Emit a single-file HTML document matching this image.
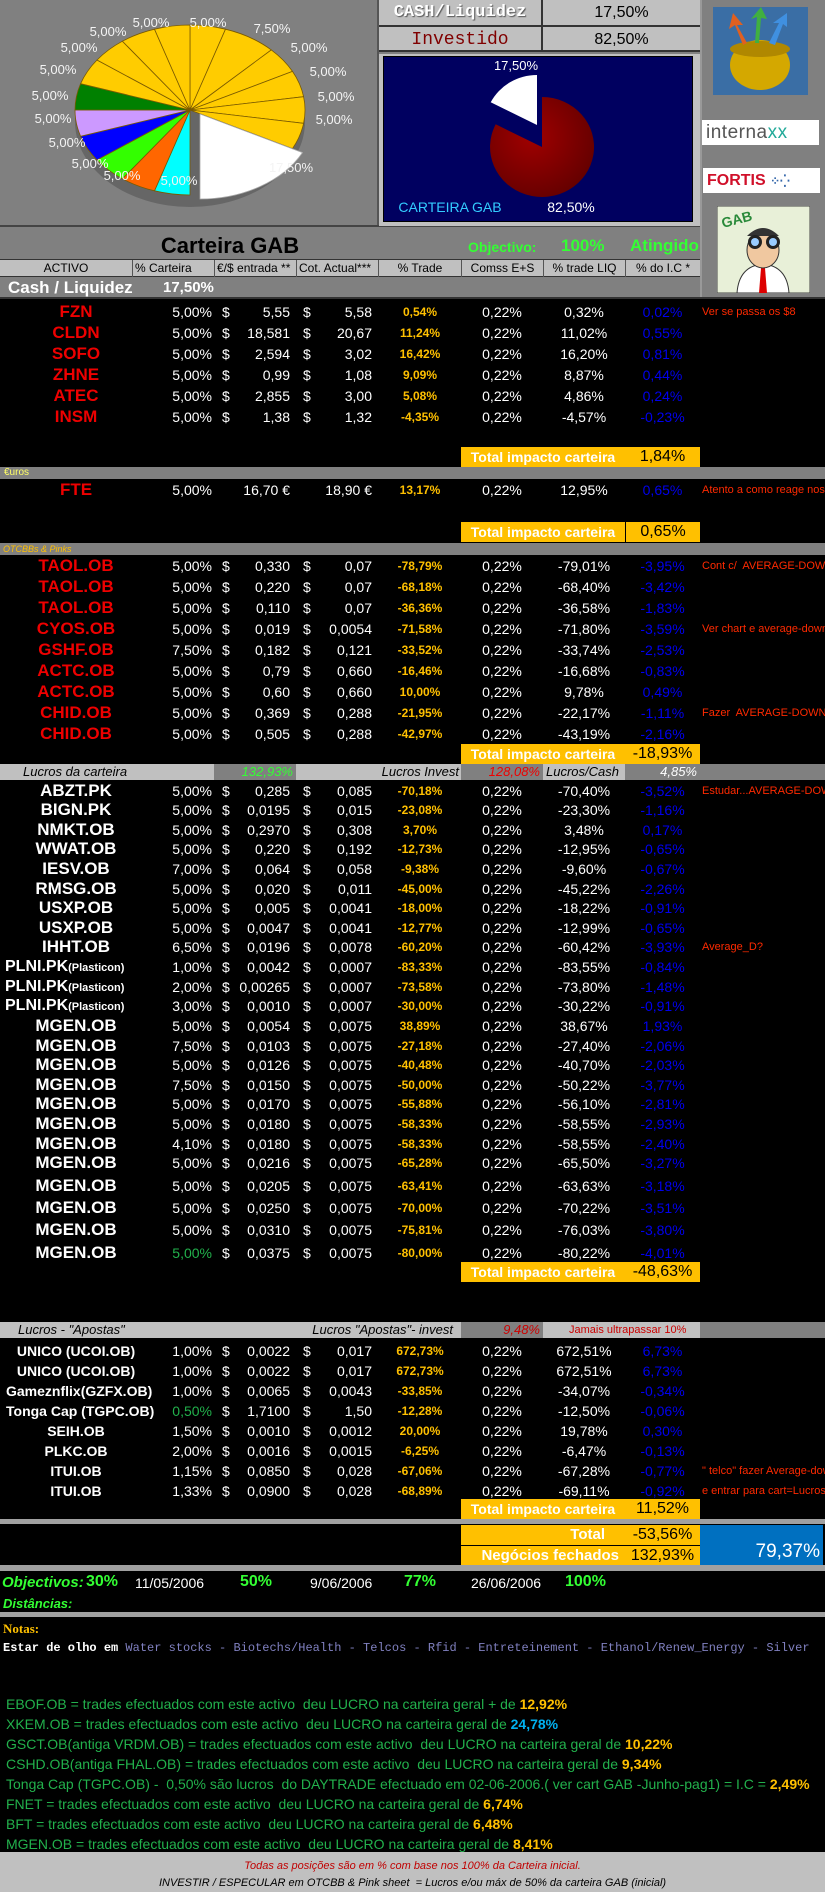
<!DOCTYPE html>
<html><head><meta charset="utf-8">
<style>
*{margin:0;padding:0;box-sizing:border-box}
body{width:825px;height:1892px;background:#000;position:relative;overflow:hidden;font-family:"Liberation Sans Narrow","Liberation Sans",sans-serif;color:#fff}
.a{position:absolute}
.r{position:absolute;left:0;width:825px;height:20px;line-height:20px;font-size:14px;color:#fff}
.r span{position:absolute;top:0;white-space:nowrap}
.t{left:0;width:152px;text-align:center;color:#e00;font-weight:bold;font-size:17px}
.w .t{color:#fff}
.s .t{color:#fff;font-size:14px}
.c{left:140px;width:72px;text-align:right}
.d1{left:222px}
.e{left:225px;width:65px;text-align:right}
.d2{left:303px}
.f{left:305px;width:67px;text-align:right}
.g{left:380px;width:80px;text-align:center;color:#ffc000;font-weight:bold;font-size:12px}
.h{left:461px;width:82px;text-align:center}
.i{left:543px;width:82px;text-align:center}
.j{left:625px;width:75px;text-align:center;color:#0000ee}
.k{left:702px;color:#ff2a00;font-size:11px}
.tot{position:absolute;left:461px;width:239px;height:20px;background:#ffc000;line-height:20px;font-size:16px;white-space:nowrap}
.tot b{position:absolute;left:0;width:164px;text-align:center;color:#fff;font-weight:bold;font-size:14px;white-space:nowrap;overflow:hidden}
.tot i{position:absolute;left:164px;width:75px;text-align:center;color:#000;font-style:normal}
.band{position:absolute;left:0;width:825px;background:#808080}
.lg{background:#c0c0c0}
.dg{background:#808080}
.note{position:absolute;left:6px;font-size:14px;color:#22b14c;white-space:nowrap}
.note b{color:#ffc000}
.pl{font-size:13px;fill:#f4f4f4;font-family:"Liberation Sans Narrow","Liberation Sans",sans-serif;text-anchor:middle}
</style></head><body>

<div class="a" style="left:0;top:0;width:825px;height:298px;background:#808080"></div>
<div class="a" style="left:700px;top:0;width:2px;height:298px;background:#999"></div>
<div class="a" style="left:377px;top:0;width:2px;height:226px;background:#555"></div>
<div class="a" style="left:0;top:225px;width:700px;height:2px;background:#444"></div>

<svg class="a" style="left:0;top:0" width="378" height="225">
<ellipse cx="190" cy="122" rx="115" ry="85" fill="#666"/>
<g stroke="#7a5a00" stroke-width="0.8">
<path d="M190 110 L190 25 A115 85 0 0 1 225.5 29.2Z" fill="#ffcc00"/>
<path d="M190 110 L225.5 29.2 A115 85 0 0 1 271.3 49.9Z" fill="#ffcc00"/>
<path d="M190 110 L271.3 49.9 A115 85 0 0 1 292.5 71.4Z" fill="#ffcc00"/>
<path d="M190 110 L292.5 71.4 A115 85 0 0 1 303.6 96.7Z" fill="#ffcc00"/>
<path d="M190 110 L303.6 96.7 A115 85 0 0 1 303.6 123.3Z" fill="#ffcc00"/>
<path d="M190 110 L303.6 123.3 A115 85 0 0 1 292.5 148.6Z" fill="#ffcc00"/>
<path d="M200 114 L302.5 152.6 A115 85 0 0 1 200 199Z" fill="#ffffff" stroke="#aaa"/>
<path d="M190 110 L190 195 A115 85 0 0 1 154.5 190.8Z" fill="#00ffff"/>
<path d="M190 110 L154.5 190.8 A115 85 0 0 1 122.4 178.8Z" fill="#ff6600"/>
<path d="M190 110 L122.4 178.8 A115 85 0 0 1 97 160Z" fill="#33ff00"/>
<path d="M190 110 L97 160 A115 85 0 0 1 80.6 136.3Z" fill="#0000ff"/>
<path d="M190 110 L80.6 136.3 A115 85 0 0 1 75 110Z" fill="#cc99ff"/>
<path d="M190 110 L75 110 A115 85 0 0 1 80.6 83.7Z" fill="#008000"/>
<path d="M190 110 L80.6 83.7 A115 85 0 0 1 97 60Z" fill="#ffcc00"/>
<path d="M190 110 L97 60 A115 85 0 0 1 122.4 41.2Z" fill="#ffcc00"/>
<path d="M190 110 L122.4 41.2 A115 85 0 0 1 154.5 29.2Z" fill="#ffcc00"/>
<path d="M190 110 L154.5 29.2 A115 85 0 0 1 190 25Z" fill="#ffcc00"/>
</g>
<text class="pl" x="272" y="33">7,50%</text>
<text class="pl" x="208" y="27">5,00%</text>
<text class="pl" x="151" y="27">5,00%</text>
<text class="pl" x="108" y="36">5,00%</text>
<text class="pl" x="79" y="52">5,00%</text>
<text class="pl" x="58" y="74">5,00%</text>
<text class="pl" x="50" y="100">5,00%</text>
<text class="pl" x="53" y="123">5,00%</text>
<text class="pl" x="67" y="147">5,00%</text>
<text class="pl" x="90" y="168">5,00%</text>
<text class="pl" x="122" y="180">5,00%</text>
<text class="pl" x="179" y="185">5,00%</text>
<text class="pl" x="291" y="172">17,50%</text>
<text class="pl" x="309" y="52">5,00%</text>
<text class="pl" x="328" y="76">5,00%</text>
<text class="pl" x="336" y="101">5,00%</text>
<text class="pl" x="334" y="124">5,00%</text>
</svg>

<div class="a" style="left:379px;top:0;width:321px;height:52px;background:#c0c0c0;border-bottom:2px solid #333"></div>
<div class="a" style="left:379px;top:25px;width:321px;height:2px;background:#333"></div>
<div class="a" style="left:541px;top:0;width:2px;height:52px;background:#333"></div>
<div class="a" style="left:379px;top:0;width:162px;height:26px;line-height:26px;text-align:center;font-family:'Liberation Mono',monospace;font-weight:bold;font-size:17px;color:#fff;text-shadow:1px 1px 1px #555">CASH/Liquidez</div>
<div class="a" style="left:543px;top:0;width:157px;height:26px;line-height:26px;text-align:center;font-size:16px;color:#000">17,50%</div>
<div class="a" style="left:379px;top:27px;width:162px;height:26px;line-height:26px;text-align:center;font-family:'Liberation Mono',monospace;font-size:18px;color:#800000">Investido</div>
<div class="a" style="left:543px;top:27px;width:157px;height:26px;line-height:26px;text-align:center;font-size:16px;color:#000">82,50%</div>
<div class="a" style="left:379px;top:54px;width:321px;height:172px;background:#c0c0c0"></div>
<svg class="a" style="left:383px;top:56px" width="310" height="166">
<rect width="310" height="166" fill="#000060" stroke="#000" stroke-width="2"/>
<defs><radialGradient id="rg" cx="0.4" cy="0.4" r="0.7"><stop offset="0" stop-color="#a00000"/><stop offset="1" stop-color="#600000"/></radialGradient></defs>
<path d="M159 91 L159 41 A52 50 0 1 1 112.7 68.3Z" fill="url(#rg)"/>
<path d="M154 69 L107.7 46.3 A52 50 0 0 1 154 19Z" fill="#fff"/>
<text x="133" y="14" fill="#fff" font-size="13" text-anchor="middle" font-family="Liberation Sans Narrow,Liberation Sans,sans-serif">17,50%</text>
<text x="67" y="156" fill="#33ccff" font-size="14" text-anchor="middle" font-family="Liberation Sans Narrow,Liberation Sans,sans-serif">CARTEIRA GAB</text>
<text x="188" y="156" fill="#fff" font-size="14" text-anchor="middle" font-family="Liberation Sans Narrow,Liberation Sans,sans-serif">82,50%</text>
</svg>

<svg class="a" style="left:713px;top:7px" width="95" height="88">
<rect width="95" height="88" fill="#3a6ea5"/>
<ellipse cx="47" cy="58" rx="30" ry="25" fill="#d4a800"/>
<ellipse cx="47" cy="42" rx="30" ry="8" fill="#b08800"/>
<path d="M30 38 L22 18 L16 22 L20 6 L30 18 L24 18 L34 36Z" fill="#e06020"/>
<path d="M42 36 L44 10 L38 12 L48 0 L54 12 L48 11 L46 36Z" fill="#40b040"/>
<path d="M56 36 L66 16 L60 16 L74 6 L74 20 L70 17 L62 38Z" fill="#4090e0"/>
</svg>
<div class="a" style="left:702px;top:120px;width:117px;height:25px;background:#fff;line-height:25px;font-size:19px;color:#555;padding-left:4px;letter-spacing:0.5px">interna<span style="color:#2a9">xx</span></div>
<div class="a" style="left:703px;top:168px;width:117px;height:25px;background:#fff;line-height:25px;font-size:16px;font-weight:bold;color:#d0102a;padding-left:4px;font-family:'Liberation Sans',sans-serif">FORTIS <span style="color:#36a;font-size:12px">⁘⁛</span></div>
<svg class="a" style="left:717px;top:206px" width="93" height="87">
<rect width="93" height="87" fill="#e8f0d8" stroke="#444"/>
<text x="6" y="22" fill="#2a8a3a" font-size="14" font-weight="bold" font-family="Liberation Sans,sans-serif" transform="rotate(-15 6 22)">GAB</text>
<path d="M20 87 Q22 60 46 58 Q70 60 72 87Z" fill="#fff" stroke="#333"/>
<path d="M44 62 L48 62 L50 87 L42 87Z" fill="#d00"/>
<ellipse cx="46" cy="44" rx="16" ry="18" fill="#f0c8a0" stroke="#333"/>
<path d="M30 30 Q46 14 62 30" fill="#333"/>
<circle cx="38" cy="36" r="7" fill="#222"/><circle cx="56" cy="36" r="7" fill="#222"/>
<circle cx="38" cy="36" r="4" fill="#9cf"/><circle cx="56" cy="36" r="4" fill="#9cf"/>
</svg>

<div class="a" style="left:150px;top:233px;width:160px;text-align:center;font-size:22px;font-weight:bold;color:#000;font-family:'Liberation Sans',sans-serif">Carteira GAB</div>
<div class="a" style="left:468px;top:239px;font-size:14px;color:#33ff33;font-weight:bold">Objectivo:</div>
<div class="a" style="left:561px;top:236px;font-size:17px;color:#33ff33;font-weight:bold">100%</div>
<div class="a" style="left:630px;top:236px;font-size:17px;color:#33ff33;font-weight:bold">Atingido</div>

<div class="a lg" style="left:0;top:259px;width:700px;height:18px;border-top:1px solid #333;border-bottom:1px solid #333"></div>
<div class="a" style="left:0;top:260px;width:700px;height:17px;font-size:12px;color:#000;line-height:17px;white-space:nowrap">
<span class="a" style="left:0;width:132px;text-align:center">ACTIVO</span>
<span class="a" style="left:132px;width:82px;border-left:1px solid #555;padding-left:2px">% Carteira</span>
<span class="a" style="left:214px;width:82px;border-left:1px solid #555;padding-left:2px;overflow:hidden">€/$ entrada **</span>
<span class="a" style="left:296px;width:82px;border-left:1px solid #555;padding-left:2px;overflow:hidden">Cot. Actual***</span>
<span class="a" style="left:378px;width:83px;border-left:1px solid #555;text-align:center">% Trade</span>
<span class="a" style="left:461px;width:82px;border-left:1px solid #555;text-align:center">Comss E+S</span>
<span class="a" style="left:543px;width:82px;border-left:1px solid #555;text-align:center">% trade LIQ</span>
<span class="a" style="left:625px;width:75px;border-left:1px solid #555;text-align:center">% do I.C *</span>
</div>
<div class="a" style="left:8px;top:278px;font-size:17px;font-weight:bold;color:#fff">Cash / Liquidez</div>
<div class="a" style="left:163px;top:279px;font-size:15px;font-weight:bold;color:#fff">17,50%</div>
<div class="a" style="left:0;top:297px;width:825px;height:2px;background:#333"></div>

<div class="r" style="top:302px"><span class="t">FZN</span><span class="c">5,00%</span><span class="d1">$</span><span class="e">5,55</span><span class="d2">$</span><span class="f">5,58</span><span class="g">0,54%</span><span class="h">0,22%</span><span class="i">0,32%</span><span class="j">0,02%</span><span class="k">Ver se passa os $8</span></div>
<div class="r" style="top:323px"><span class="t">CLDN</span><span class="c">5,00%</span><span class="d1">$</span><span class="e">18,581</span><span class="d2">$</span><span class="f">20,67</span><span class="g">11,24%</span><span class="h">0,22%</span><span class="i">11,02%</span><span class="j">0,55%</span></div>
<div class="r" style="top:344px"><span class="t">SOFO</span><span class="c">5,00%</span><span class="d1">$</span><span class="e">2,594</span><span class="d2">$</span><span class="f">3,02</span><span class="g">16,42%</span><span class="h">0,22%</span><span class="i">16,20%</span><span class="j">0,81%</span></div>
<div class="r" style="top:365px"><span class="t">ZHNE</span><span class="c">5,00%</span><span class="d1">$</span><span class="e">0,99</span><span class="d2">$</span><span class="f">1,08</span><span class="g">9,09%</span><span class="h">0,22%</span><span class="i">8,87%</span><span class="j">0,44%</span></div>
<div class="r" style="top:386px"><span class="t">ATEC</span><span class="c">5,00%</span><span class="d1">$</span><span class="e">2,855</span><span class="d2">$</span><span class="f">3,00</span><span class="g">5,08%</span><span class="h">0,22%</span><span class="i">4,86%</span><span class="j">0,24%</span></div>
<div class="r" style="top:407px"><span class="t">INSM</span><span class="c">5,00%</span><span class="d1">$</span><span class="e">1,38</span><span class="d2">$</span><span class="f">1,32</span><span class="g">-4,35%</span><span class="h">0,22%</span><span class="i">-4,57%</span><span class="j">-0,23%</span></div>
<div class="tot" style="top:447px"><b>Total impacto carteira</b><i>1,84%</i></div>

<div class="band" style="top:467px;height:12px;font-size:10px;line-height:12px;color:#ffff66;padding-left:4px">€uros</div>
<div class="r" style="top:480px"><span class="t">FTE</span><span class="c">5,00%</span><span class="e">16,70 €</span><span class="f">18,90 €</span><span class="g">13,17%</span><span class="h">0,22%</span><span class="i">12,95%</span><span class="j">0,65%</span><span class="k">Atento a como reage nos 18€</span></div>
<div class="tot" style="top:522px"><b>Total impacto carteira</b><i style="border-left:1px solid #000">0,65%</i></div>

<div class="band" style="top:543px;height:12px;font-size:9px;line-height:12px;color:#ffc000;font-style:italic;padding-left:3px">OTCBBs &amp; Pinks</div>
<div class="r" style="top:556px"><span class="t">TAOL.OB</span><span class="c">5,00%</span><span class="d1">$</span><span class="e">0,330</span><span class="d2">$</span><span class="f">0,07</span><span class="g">-78,79%</span><span class="h">0,22%</span><span class="i">-79,01%</span><span class="j">-3,95%</span><span class="k">Cont c/&nbsp; AVERAGE-DOWN?</span></div>
<div class="r" style="top:577px"><span class="t">TAOL.OB</span><span class="c">5,00%</span><span class="d1">$</span><span class="e">0,220</span><span class="d2">$</span><span class="f">0,07</span><span class="g">-68,18%</span><span class="h">0,22%</span><span class="i">-68,40%</span><span class="j">-3,42%</span></div>
<div class="r" style="top:598px"><span class="t">TAOL.OB</span><span class="c">5,00%</span><span class="d1">$</span><span class="e">0,110</span><span class="d2">$</span><span class="f">0,07</span><span class="g">-36,36%</span><span class="h">0,22%</span><span class="i">-36,58%</span><span class="j">-1,83%</span></div>
<div class="r" style="top:619px"><span class="t">CYOS.OB</span><span class="c">5,00%</span><span class="d1">$</span><span class="e">0,019</span><span class="d2">$</span><span class="f">0,0054</span><span class="g">-71,58%</span><span class="h">0,22%</span><span class="i">-71,80%</span><span class="j">-3,59%</span><span class="k">Ver chart e average-down</span></div>
<div class="r" style="top:640px"><span class="t">GSHF.OB</span><span class="c">7,50%</span><span class="d1">$</span><span class="e">0,182</span><span class="d2">$</span><span class="f">0,121</span><span class="g">-33,52%</span><span class="h">0,22%</span><span class="i">-33,74%</span><span class="j">-2,53%</span></div>
<div class="r" style="top:661px"><span class="t">ACTC.OB</span><span class="c">5,00%</span><span class="d1">$</span><span class="e">0,79</span><span class="d2">$</span><span class="f">0,660</span><span class="g">-16,46%</span><span class="h">0,22%</span><span class="i">-16,68%</span><span class="j">-0,83%</span></div>
<div class="r" style="top:682px"><span class="t">ACTC.OB</span><span class="c">5,00%</span><span class="d1">$</span><span class="e">0,60</span><span class="d2">$</span><span class="f">0,660</span><span class="g">10,00%</span><span class="h">0,22%</span><span class="i">9,78%</span><span class="j">0,49%</span></div>
<div class="r" style="top:703px"><span class="t">CHID.OB</span><span class="c">5,00%</span><span class="d1">$</span><span class="e">0,369</span><span class="d2">$</span><span class="f">0,288</span><span class="g">-21,95%</span><span class="h">0,22%</span><span class="i">-22,17%</span><span class="j">-1,11%</span><span class="k">Fazer&nbsp; AVERAGE-DOWN</span></div>
<div class="r" style="top:724px"><span class="t">CHID.OB</span><span class="c">5,00%</span><span class="d1">$</span><span class="e">0,505</span><span class="d2">$</span><span class="f">0,288</span><span class="g">-42,97%</span><span class="h">0,22%</span><span class="i">-43,19%</span><span class="j">-2,16%</span></div>
<div class="tot" style="top:744px"><b>Total impacto carteira</b><i>-18,93%</i></div>

<div class="band" style="top:764px;height:16px"></div>
<div class="a" style="top:764px;height:16px;line-height:16px;font-size:13px;font-style:italic;color:#000;width:825px;left:0;white-space:nowrap">
<span class="a lg" style="left:0;width:214px;height:16px;padding-left:23px">Lucros da carteira</span>
<span class="a dg" style="left:214px;width:82px;height:16px;text-align:right;padding-right:3px;color:#33ff33">132,93%</span>
<span class="a lg" style="left:296px;width:165px;height:16px;text-align:right;padding-right:2px">Lucros Invest</span>
<span class="a dg" style="left:461px;width:82px;height:16px;text-align:right;padding-right:3px;color:#e00">128,08%</span>
<span class="a lg" style="left:543px;width:82px;height:16px;padding-left:3px">Lucros/Cash</span>
<span class="a dg" style="left:625px;width:75px;height:16px;text-align:right;padding-right:3px;color:#fff">4,85%</span>
</div>

<div class="w">
<div class="r" style="top:781px"><span class="t">ABZT.PK</span><span class="c">5,00%</span><span class="d1">$</span><span class="e">0,285</span><span class="d2">$</span><span class="f">0,085</span><span class="g">-70,18%</span><span class="h">0,22%</span><span class="i">-70,40%</span><span class="j">-3,52%</span><span class="k">Estudar...AVERAGE-DOWN</span></div>
<div class="r" style="top:800px"><span class="t">BIGN.PK</span><span class="c">5,00%</span><span class="d1">$</span><span class="e">0,0195</span><span class="d2">$</span><span class="f">0,015</span><span class="g">-23,08%</span><span class="h">0,22%</span><span class="i">-23,30%</span><span class="j">-1,16%</span></div>
<div class="r" style="top:820px"><span class="t">NMKT.OB</span><span class="c">5,00%</span><span class="d1">$</span><span class="e">0,2970</span><span class="d2">$</span><span class="f">0,308</span><span class="g">3,70%</span><span class="h">0,22%</span><span class="i">3,48%</span><span class="j">0,17%</span></div>
<div class="r" style="top:839px"><span class="t">WWAT.OB</span><span class="c">5,00%</span><span class="d1">$</span><span class="e">0,220</span><span class="d2">$</span><span class="f">0,192</span><span class="g">-12,73%</span><span class="h">0,22%</span><span class="i">-12,95%</span><span class="j">-0,65%</span></div>
<div class="r" style="top:859px"><span class="t">IESV.OB</span><span class="c">7,00%</span><span class="d1">$</span><span class="e">0,064</span><span class="d2">$</span><span class="f">0,058</span><span class="g">-9,38%</span><span class="h">0,22%</span><span class="i">-9,60%</span><span class="j">-0,67%</span></div>
<div class="r" style="top:879px"><span class="t">RMSG.OB</span><span class="c">5,00%</span><span class="d1">$</span><span class="e">0,020</span><span class="d2">$</span><span class="f">0,011</span><span class="g">-45,00%</span><span class="h">0,22%</span><span class="i">-45,22%</span><span class="j">-2,26%</span></div>
<div class="r" style="top:898px"><span class="t">USXP.OB</span><span class="c">5,00%</span><span class="d1">$</span><span class="e">0,005</span><span class="d2">$</span><span class="f">0,0041</span><span class="g">-18,00%</span><span class="h">0,22%</span><span class="i">-18,22%</span><span class="j">-0,91%</span></div>
<div class="r" style="top:918px"><span class="t">USXP.OB</span><span class="c">5,00%</span><span class="d1">$</span><span class="e">0,0047</span><span class="d2">$</span><span class="f">0,0041</span><span class="g">-12,77%</span><span class="h">0,22%</span><span class="i">-12,99%</span><span class="j">-0,65%</span></div>
<div class="r" style="top:937px"><span class="t">IHHT.OB</span><span class="c">6,50%</span><span class="d1">$</span><span class="e">0,0196</span><span class="d2">$</span><span class="f">0,0078</span><span class="g">-60,20%</span><span class="h">0,22%</span><span class="i">-60,42%</span><span class="j">-3,93%</span><span class="k">Average_D?</span></div>
<div class="r" style="top:957px"><span class="t" style="text-align:left;padding-left:5px;font-size:16px">PLNI.PK<small style="font-size:11px">(Plasticon)</small></span><span class="c">1,00%</span><span class="d1">$</span><span class="e">0,0042</span><span class="d2">$</span><span class="f">0,0007</span><span class="g">-83,33%</span><span class="h">0,22%</span><span class="i">-83,55%</span><span class="j">-0,84%</span></div>
<div class="r" style="top:977px"><span class="t" style="text-align:left;padding-left:5px;font-size:16px">PLNI.PK<small style="font-size:11px">(Plasticon)</small></span><span class="c">2,00%</span><span class="d1">$</span><span class="e">0,00265</span><span class="d2">$</span><span class="f">0,0007</span><span class="g">-73,58%</span><span class="h">0,22%</span><span class="i">-73,80%</span><span class="j">-1,48%</span></div>
<div class="r" style="top:996px"><span class="t" style="text-align:left;padding-left:5px;font-size:16px">PLNI.PK<small style="font-size:11px">(Plasticon)</small></span><span class="c">3,00%</span><span class="d1">$</span><span class="e">0,0010</span><span class="d2">$</span><span class="f">0,0007</span><span class="g">-30,00%</span><span class="h">0,22%</span><span class="i">-30,22%</span><span class="j">-0,91%</span></div>
<div class="r" style="top:1016px"><span class="t">MGEN.OB</span><span class="c">5,00%</span><span class="d1">$</span><span class="e">0,0054</span><span class="d2">$</span><span class="f">0,0075</span><span class="g">38,89%</span><span class="h">0,22%</span><span class="i">38,67%</span><span class="j">1,93%</span></div>
<div class="r" style="top:1036px"><span class="t">MGEN.OB</span><span class="c">7,50%</span><span class="d1">$</span><span class="e">0,0103</span><span class="d2">$</span><span class="f">0,0075</span><span class="g">-27,18%</span><span class="h">0,22%</span><span class="i">-27,40%</span><span class="j">-2,06%</span></div>
<div class="r" style="top:1055px"><span class="t">MGEN.OB</span><span class="c">5,00%</span><span class="d1">$</span><span class="e">0,0126</span><span class="d2">$</span><span class="f">0,0075</span><span class="g">-40,48%</span><span class="h">0,22%</span><span class="i">-40,70%</span><span class="j">-2,03%</span></div>
<div class="r" style="top:1075px"><span class="t">MGEN.OB</span><span class="c">7,50%</span><span class="d1">$</span><span class="e">0,0150</span><span class="d2">$</span><span class="f">0,0075</span><span class="g">-50,00%</span><span class="h">0,22%</span><span class="i">-50,22%</span><span class="j">-3,77%</span></div>
<div class="r" style="top:1094px"><span class="t">MGEN.OB</span><span class="c">5,00%</span><span class="d1">$</span><span class="e">0,0170</span><span class="d2">$</span><span class="f">0,0075</span><span class="g">-55,88%</span><span class="h">0,22%</span><span class="i">-56,10%</span><span class="j">-2,81%</span></div>
<div class="r" style="top:1114px"><span class="t">MGEN.OB</span><span class="c">5,00%</span><span class="d1">$</span><span class="e">0,0180</span><span class="d2">$</span><span class="f">0,0075</span><span class="g">-58,33%</span><span class="h">0,22%</span><span class="i">-58,55%</span><span class="j">-2,93%</span></div>
<div class="r" style="top:1134px"><span class="t">MGEN.OB</span><span class="c">4,10%</span><span class="d1">$</span><span class="e">0,0180</span><span class="d2">$</span><span class="f">0,0075</span><span class="g">-58,33%</span><span class="h">0,22%</span><span class="i">-58,55%</span><span class="j">-2,40%</span></div>
<div class="r" style="top:1153px"><span class="t">MGEN.OB</span><span class="c">5,00%</span><span class="d1">$</span><span class="e">0,0216</span><span class="d2">$</span><span class="f">0,0075</span><span class="g">-65,28%</span><span class="h">0,22%</span><span class="i">-65,50%</span><span class="j">-3,27%</span></div>
<div class="r" style="top:1176px"><span class="t">MGEN.OB</span><span class="c">5,00%</span><span class="d1">$</span><span class="e">0,0205</span><span class="d2">$</span><span class="f">0,0075</span><span class="g">-63,41%</span><span class="h">0,22%</span><span class="i">-63,63%</span><span class="j">-3,18%</span></div>
<div class="r" style="top:1198px"><span class="t">MGEN.OB</span><span class="c">5,00%</span><span class="d1">$</span><span class="e">0,0250</span><span class="d2">$</span><span class="f">0,0075</span><span class="g">-70,00%</span><span class="h">0,22%</span><span class="i">-70,22%</span><span class="j">-3,51%</span></div>
<div class="r" style="top:1220px"><span class="t">MGEN.OB</span><span class="c">5,00%</span><span class="d1">$</span><span class="e">0,0310</span><span class="d2">$</span><span class="f">0,0075</span><span class="g">-75,81%</span><span class="h">0,22%</span><span class="i">-76,03%</span><span class="j">-3,80%</span></div>
<div class="r" style="top:1243px"><span class="t">MGEN.OB</span><span class="c" style="color:#22b14c">5,00%</span><span class="d1">$</span><span class="e">0,0375</span><span class="d2">$</span><span class="f">0,0075</span><span class="g">-80,00%</span><span class="h">0,22%</span><span class="i">-80,22%</span><span class="j">-4,01%</span></div>
</div>
<div class="tot" style="top:1262px"><b>Total impacto carteira</b><i>-48,63%</i></div>

<div class="band" style="top:1322px;height:16px"></div>
<div class="a" style="top:1322px;height:16px;line-height:16px;font-size:13px;font-style:italic;color:#000;width:825px;left:0;white-space:nowrap">
<span class="a lg" style="left:0;width:296px;height:16px;padding-left:18px">Lucros - "Apostas"</span>
<span class="a lg" style="left:296px;width:165px;height:16px;text-align:right;padding-right:8px">Lucros "Apostas"- invest</span>
<span class="a dg" style="left:461px;width:82px;height:16px;text-align:right;padding-right:3px;color:#c00">9,48%</span>
<span class="a lg" style="left:543px;width:157px;height:16px;padding-left:26px;color:#c00;font-style:normal;font-size:11px">Jamais ultrapassar 10%</span>
</div>

<div class="s">
<div class="r" style="top:1341px"><span class="t">UNICO (UCOI.OB)</span><span class="c">1,00%</span><span class="d1">$</span><span class="e">0,0022</span><span class="d2">$</span><span class="f">0,017</span><span class="g">672,73%</span><span class="h">0,22%</span><span class="i">672,51%</span><span class="j">6,73%</span></div>
<div class="r" style="top:1361px"><span class="t">UNICO (UCOI.OB)</span><span class="c">1,00%</span><span class="d1">$</span><span class="e">0,0022</span><span class="d2">$</span><span class="f">0,017</span><span class="g">672,73%</span><span class="h">0,22%</span><span class="i">672,51%</span><span class="j">6,73%</span></div>
<div class="r" style="top:1381px"><span class="t" style="text-align:left;padding-left:6px">Gameznflix(GZFX.OB)</span><span class="c">1,00%</span><span class="d1">$</span><span class="e">0,0065</span><span class="d2">$</span><span class="f">0,0043</span><span class="g">-33,85%</span><span class="h">0,22%</span><span class="i">-34,07%</span><span class="j">-0,34%</span></div>
<div class="r" style="top:1401px"><span class="t" style="text-align:left;padding-left:6px">Tonga Cap (TGPC.OB)</span><span class="c" style="color:#22b14c">0,50%</span><span class="d1">$</span><span class="e">1,7100</span><span class="d2">$</span><span class="f">1,50</span><span class="g">-12,28%</span><span class="h">0,22%</span><span class="i">-12,50%</span><span class="j">-0,06%</span></div>
<div class="r" style="top:1421px"><span class="t">SEIH.OB</span><span class="c">1,50%</span><span class="d1">$</span><span class="e">0,0010</span><span class="d2">$</span><span class="f">0,0012</span><span class="g">20,00%</span><span class="h">0,22%</span><span class="i">19,78%</span><span class="j">0,30%</span></div>
<div class="r" style="top:1441px"><span class="t">PLKC.OB</span><span class="c">2,00%</span><span class="d1">$</span><span class="e">0,0016</span><span class="d2">$</span><span class="f">0,0015</span><span class="g">-6,25%</span><span class="h">0,22%</span><span class="i">-6,47%</span><span class="j">-0,13%</span></div>
<div class="r" style="top:1461px"><span class="t">ITUI.OB</span><span class="c">1,15%</span><span class="d1">$</span><span class="e">0,0850</span><span class="d2">$</span><span class="f">0,028</span><span class="g">-67,06%</span><span class="h">0,22%</span><span class="i">-67,28%</span><span class="j">-0,77%</span><span class="k">" telco" fazer Average-down</span></div>
<div class="r" style="top:1481px"><span class="t">ITUI.OB</span><span class="c">1,33%</span><span class="d1">$</span><span class="e">0,0900</span><span class="d2">$</span><span class="f">0,028</span><span class="g">-68,89%</span><span class="h">0,22%</span><span class="i">-69,11%</span><span class="j">-0,92%</span><span class="k">e entrar para cart=Lucros</span></div>
</div>
<div class="tot" style="top:1499px"><b>Total impacto carteira</b><i>11,52%</i></div>

<div class="band" style="top:1519px;height:5px;background:#a0a0a0"></div>
<div class="tot" style="top:1525px"><b style="text-align:right;padding-right:20px;font-size:15px">Total</b><i>-53,56%</i></div>
<div class="tot" style="top:1545px;border-top:1px solid #000"><b style="text-align:right;padding-right:6px;font-size:15px">Negócios fechados</b><i>132,93%</i></div>
<div class="a" style="left:700px;top:1525px;width:123px;height:40px;background:#0070c0;color:#fff;font-size:19px;text-align:right;padding-right:3px;line-height:54px">79,37%</div>
<div class="band" style="top:1565px;height:6px;background:#a0a0a0"></div>

<div class="a" style="left:2px;top:1574px;font-size:15px;font-weight:bold;font-style:italic;color:#33ff33">Objectivos:</div>
<div class="a" style="left:86px;top:1573px;font-size:16px;font-weight:bold;color:#33ff33">30%</div>
<div class="a" style="left:135px;top:1575px;font-size:14px;color:#fff">11/05/2006</div>
<div class="a" style="left:240px;top:1573px;font-size:16px;font-weight:bold;color:#33ff33">50%</div>
<div class="a" style="left:310px;top:1575px;font-size:14px;color:#fff">9/06/2006</div>
<div class="a" style="left:404px;top:1573px;font-size:16px;font-weight:bold;color:#33ff33">77%</div>
<div class="a" style="left:471px;top:1575px;font-size:14px;color:#fff">26/06/2006</div>
<div class="a" style="left:565px;top:1573px;font-size:16px;font-weight:bold;color:#33ff33">100%</div>
<div class="a" style="left:3px;top:1596px;font-size:13px;font-weight:bold;font-style:italic;color:#33ff33">Distâncias:</div>
<div class="band" style="top:1612px;height:5px;background:#a0a0a0"></div>

<div class="a" style="left:3px;top:1621px;font-size:13px;color:#ffc000;font-family:'Liberation Serif',serif;font-weight:bold">Notas:</div>
<div class="a" style="left:3px;top:1641px;font-size:12px;color:#fff;font-family:'Liberation Mono',monospace;font-weight:bold;white-space:nowrap">Estar de olho em <span style="color:#8080c0;font-weight:normal">Water stocks - Biotechs/Health - Telcos - Rfid - Entreteinement - Ethanol/Renew_Energy - Silver</span></div>

<div class="note" style="top:1696px">EBOF.OB = trades efectuados com este activo&nbsp; deu LUCRO na carteira geral + de <b>12,92%</b></div>
<div class="note" style="top:1716px">XKEM.OB = trades efectuados com este activo&nbsp; deu LUCRO na carteira geral de <b style="color:#00b0f0">24,78%</b></div>
<div class="note" style="top:1736px">GSCT.OB(antiga VRDM.OB) = trades efectuados com este activo&nbsp; deu LUCRO na carteira geral de <b>10,22%</b></div>
<div class="note" style="top:1756px">CSHD.OB(antiga FHAL.OB) = trades efectuados com este activo&nbsp; deu LUCRO na carteira geral de <b>9,34%</b></div>
<div class="note" style="top:1776px">Tonga Cap (TGPC.OB) -&nbsp; 0,50% são lucros&nbsp; do DAYTRADE efectuado em 02-06-2006.( ver cart GAB -Junho-pag1) = I.C = <b>2,49%</b></div>
<div class="note" style="top:1796px">FNET = trades efectuados com este activo&nbsp; deu LUCRO na carteira geral de <b>6,74%</b></div>
<div class="note" style="top:1816px">BFT = trades efectuados com este activo&nbsp; deu LUCRO na carteira geral de <b>6,48%</b></div>
<div class="note" style="top:1836px">MGEN.OB = trades efectuados com este activo&nbsp; deu LUCRO na carteira geral de <b>8,41%</b></div>

<div class="a" style="left:0;top:1852px;width:825px;height:40px;background:#c0c0c0"></div>
<div class="a" style="left:0;top:1860px;width:825px;text-align:center;font-size:11px;font-style:italic;color:#c00000">Todas as posições são em % com base nos 100% da Carteira inicial.</div>
<div class="a" style="left:0;top:1877px;width:825px;text-align:center;font-size:11px;font-style:italic;color:#000">INVESTIR / ESPECULAR em OTCBB &amp; Pink sheet&nbsp; = Lucros e/ou máx de 50% da carteira GAB (inicial)</div>
</body></html>
